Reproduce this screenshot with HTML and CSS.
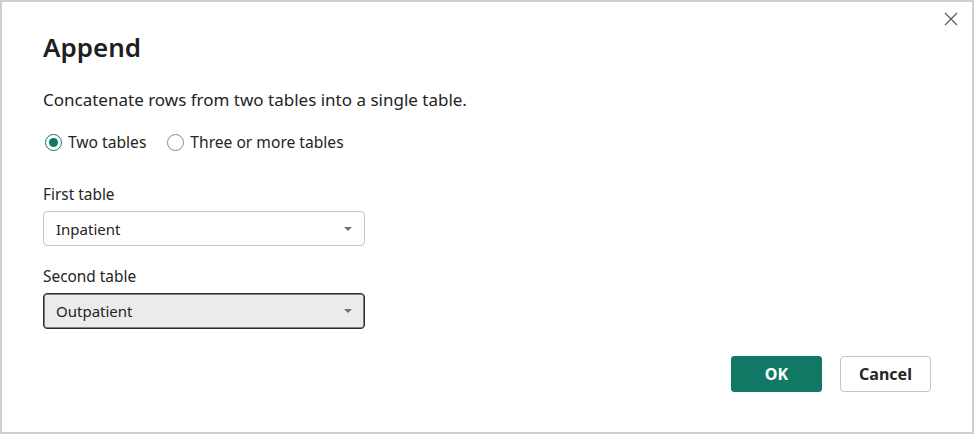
FILE: index.html
```html
<!DOCTYPE html>
<html lang="en">
<head>
<meta charset="utf-8">
<title>Append</title>
<link rel="stylesheet" href="styles.css">
</head>
<body>
<div class="dialog">
  <button class="close" aria-label="Close">
    <svg width="14" height="14" viewBox="0 0 14 14"><path d="M1 1 L13 13 M13 1 L1 13" stroke="#605e5c" stroke-width="1.3" fill="none"/></svg>
  </button>
  <h1 class="title">Append</h1>
  <p class="desc">Concatenate rows from two tables into a single table.</p>
  <div class="radios">
    <label class="radio"><span class="circle checked"></span>Two tables</label>
    <label class="radio"><span class="circle"></span>Three or more tables</label>
  </div>
  <div class="label first">First table</div>
  <div class="select">
    <span>Inpatient</span>
    <span class="caret"></span>
  </div>
  <div class="label second">Second table</div>
  <div class="select focused">
    <span>Outpatient</span>
    <span class="caret"></span>
  </div>
  <div class="actions">
    <button class="btn primary">OK</button>
    <button class="btn">Cancel</button>
  </div>
</div>
</body>
</html>
```
FILE: styles.css
```css
* { box-sizing: border-box; }
html, body { margin: 0; padding: 0; background: #fff; }
body {
  font-family: "Noto Sans", "Open Sans", "Liberation Sans", sans-serif;
  color: #252423;
}
.dialog {
  position: relative;
  width: 974px;
  height: 434px;
  border: 2px solid #cfcfcf;
  padding: 29px 41px 0 41px;
}
.close {
  position: absolute;
  top: 10px;
  right: 14px;
  border: 0;
  background: none;
  padding: 0;
  width: 14px;
  height: 14px;
  display: flex;
}
.title {
  margin: 0;
  font-size: 26px;
  line-height: 32px;
  font-weight: 600;
  color: #201f1e;
}
.desc {
  margin: 27px 0 0;
  font-size: 17px;
  line-height: 20px;
}
.radios {
  margin-top: 22px;
  display: flex;
  gap: 19px;
  height: 20px;
  align-items: center;
}
.radio {
  display: flex;
  align-items: center;
  gap: 6px;
  font-size: 15.6px;
  line-height: 20px;
}
.circle {
  width: 17px;
  height: 17px;
  border: 1px solid #8a8886;
  border-radius: 50%;
  display: flex;
  align-items: center;
  justify-content: center;
  margin-left: 2px;
}
.circle.checked { border-color: #117865; }
.circle.checked::after {
  content: "";
  width: 9px;
  height: 9px;
  border-radius: 50%;
  background: #117865;
}
.label {
  font-size: 15.4px;
  line-height: 20px;
}
.label.first { margin-top: 33px; }
.label.second { margin-top: 21px; }
.select {
  margin-top: 6px;
  width: 322px;
  height: 35px;
  border: 1px solid #c8c6c4;
  border-radius: 4px;
  display: flex;
  align-items: center;
  justify-content: space-between;
  padding: 0 12px 0 12px;
  font-size: 15px;
}
.select.focused {
  height: 36px;
  background: #ebebeb;
  border-color: #2b2a29;
  box-shadow: inset 0 0 0 1px rgba(0,0,0,0.45);
}
.caret {
  width: 0;
  height: 0;
  border-left: 4px solid transparent;
  border-right: 4px solid transparent;
  border-top: 4px solid #707070;
}
.actions {
  margin-top: 27px;
  display: flex;
  justify-content: flex-end;
  gap: 18px;
  padding-right: 0;
}
.btn {
  width: 91px;
  height: 36px;
  font-family: inherit;
  font-size: 16px;
  font-weight: 700;
  color: #252423;
  background: #fff;
  border: 1px solid #c8c6c4;
  border-radius: 4px;
}
.btn.primary {
  background: #117865;
  border-color: #117865;
  color: #fff;
  border-radius: 3px;
}
```
